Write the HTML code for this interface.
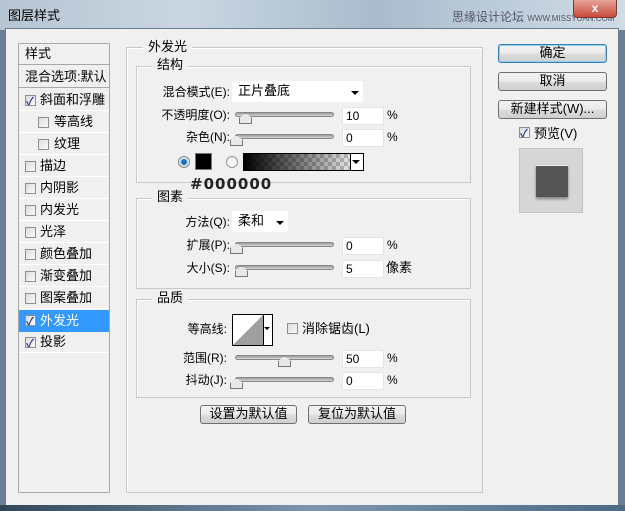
<!DOCTYPE html>
<html><head><meta charset="utf-8"><style>
*{margin:0;padding:0;box-sizing:border-box}
body{width:625px;height:511px;overflow:hidden;background:#6a7f93;font-family:"Liberation Sans","Noto Sans CJK SC",sans-serif;font-size:12px;color:#000;position:relative}
.a{position:absolute}
.title{left:0;top:0;width:625px;height:30px;background:linear-gradient(90deg,#b7c5d3 0%,#c9d6e2 30%,#a9bccd 60%,#d0dce7 100%)}
.dlg{left:5px;top:28px;width:614px;height:478px;background:#f0f0f0;border:1px solid #6d7c8b}
.bot{left:0;top:505px;width:625px;height:6px;background:linear-gradient(90deg,#31465a,#7d96ad,#4d6a85)}
.gb{position:absolute;border:1px solid #c8c8c8;box-shadow:1px 1px 0 #fff inset}
.lg{position:absolute;background:#f0f0f0;padding:0 5px;font-size:13px;line-height:14px}
.cb{position:absolute;width:11px;height:11px;border:1px solid #8e8f8f;background:linear-gradient(135deg,#dcdcdc,#fafafa)}
.cb.on::after{content:"✓";position:absolute;left:0px;top:-3px;font-size:11px;color:#2d3d8e;font-weight:bold}
.row{position:absolute;left:19px;width:90px;height:22px;border-bottom:1px solid #fff;font-size:13px;line-height:22px}
.lbl{position:absolute;font-size:12px;text-align:right;line-height:14px}
.inp{position:absolute;background:#fff;border:1px solid #e4e4e4;font-size:12px;line-height:16px;padding-left:3px;height:18px}
.tr{position:absolute;height:5px;background:linear-gradient(#9a9a9a,#d6d6d6);border-radius:3px;border:1px solid #888}
.th{position:absolute;width:0;height:0}
.th::before{content:"";position:absolute;left:-6px;top:0;width:11px;height:9px;background:#e8e8e8;border:1px solid #777;clip-path:polygon(50% 0,100% 45%,100% 100%,0 100%,0 45%)}
.btn{position:absolute;border:1px solid #707070;border-radius:3px;background:linear-gradient(#f2f2f2 0%,#ebebeb 50%,#dddddd 51%,#cfcfcf 100%);text-align:center;font-size:13px;line-height:16px}
.dd{position:absolute;background:#fff;font-size:13px;line-height:20px;padding-left:6px}
.arr{position:absolute;width:0;height:0;border-left:4px solid transparent;border-right:4px solid transparent;border-top:4px solid #000}
</style></head><body>
<div class="a title"></div>
<div class="a" style="left:8px;top:5px;font-size:13px">图层样式</div>
<div class="a" style="left:452px;top:8px;font-size:12px;color:#556">思缘设计论坛 <span style="font-size:8px">WWW.MISSYUAN.COM</span></div>
<div class="a" style="left:573px;top:0;width:44px;height:18px;background:linear-gradient(#e8a49a,#c74b3c);border:1px solid #7a3a33;border-top:none;border-radius:0 0 4px 4px;color:#fff;text-align:center;font-weight:bold;font-size:12px;line-height:16px">x</div>
<div class="a dlg"></div>
<div class="a bot"></div>

<!-- left list -->
<div class="a" style="left:18px;top:43px;width:92px;height:450px;border:1px solid #a8a8a8;background:#f0f0f0"></div>
<div class="row" style="top:43px;font-size:13px;padding-left:6px;border-bottom:1px solid #a8a8a8">样式</div>
<div class="row" style="top:66px;padding-left:6px;border-bottom:1px solid #a8a8a8">混合选项:默认</div>
<div class="row" style="top:89px;padding-left:21px">斜面和浮雕</div><div class="cb on" style="left:25px;top:95px"></div>
<div class="row" style="top:111px;padding-left:35px">等高线</div><div class="cb" style="left:38px;top:117px"></div>
<div class="row" style="top:133px;padding-left:35px">纹理</div><div class="cb" style="left:38px;top:139px"></div>
<div class="row" style="top:155px;padding-left:21px">描边</div><div class="cb" style="left:25px;top:161px"></div>
<div class="row" style="top:177px;padding-left:21px">内阴影</div><div class="cb" style="left:25px;top:183px"></div>
<div class="row" style="top:199px;padding-left:21px">内发光</div><div class="cb" style="left:25px;top:205px"></div>
<div class="row" style="top:221px;padding-left:21px">光泽</div><div class="cb" style="left:25px;top:227px"></div>
<div class="row" style="top:243px;padding-left:21px">颜色叠加</div><div class="cb" style="left:25px;top:249px"></div>
<div class="row" style="top:265px;padding-left:21px">渐变叠加</div><div class="cb" style="left:25px;top:271px"></div>
<div class="row" style="top:287px;padding-left:21px">图案叠加</div><div class="cb" style="left:25px;top:293px"></div>
<div class="row" style="top:310px;padding-left:21px;background:#3399ff;color:#fff;border:none">外发光</div><div class="cb on" style="left:25px;top:315px"></div>
<div class="row" style="top:331px;padding-left:21px">投影</div><div class="cb on" style="left:25px;top:337px"></div>

<!-- main group -->
<div class="gb" style="left:126px;top:47px;width:357px;height:446px"></div>
<div class="lg" style="left:143px;top:40px">外发光</div>
<div class="gb" style="left:136px;top:66px;width:335px;height:117px"></div>
<div class="lg" style="left:152px;top:58px">结构</div>
<div class="lbl" style="left:150px;top:85px;width:80px">混合模式(E):</div>
<div class="dd" style="left:232px;top:81px;width:131px;height:21px">正片叠底</div><div class="arr" style="left:351px;top:91px"></div>
<div class="lbl" style="left:150px;top:108px;width:80px">不透明度(O):</div>
<div class="tr" style="left:235px;top:112px;width:99px"></div><div class="th" style="left:245px;top:113px"></div>
<div class="inp" style="left:342px;top:107px;width:42px">10</div><div class="lbl" style="left:387px;top:108px">%</div>
<div class="lbl" style="left:150px;top:130px;width:80px">杂色(N):</div>
<div class="tr" style="left:235px;top:134px;width:99px"></div><div class="th" style="left:236px;top:135px"></div>
<div class="inp" style="left:342px;top:129px;width:42px">0</div><div class="lbl" style="left:387px;top:130px">%</div>
<div class="a" style="left:178px;top:156px;width:12px;height:12px;border-radius:50%;border:1px solid #888;background:radial-gradient(#1b6fb8 30%,#7ec1ea 45%,#eee 60%)"></div>
<div class="a" style="left:195px;top:153px;width:17px;height:17px;background:#000;border:1px solid #777"></div>
<div class="a" style="left:226px;top:156px;width:12px;height:12px;border-radius:50%;border:1px solid #999;background:#f4f4f4"></div>
<div class="a" style="left:243px;top:153px;width:121px;height:18px;border:1px solid #000;background:linear-gradient(90deg,#000,rgba(0,0,0,0)),repeating-conic-gradient(#ccc 0 25%,#fff 0 50%) 0 0/8px 8px"></div>
<div class="a" style="left:350px;top:154px;width:13px;height:16px;background:#fff;border-left:1px solid #000"></div><div class="arr" style="left:352px;top:160px"></div>
<div class="a" style="left:190px;top:175px;font-weight:bold;font-size:15px;color:#222;letter-spacing:1px;font-family:'DejaVu Sans',sans-serif">#000000</div>

<div class="gb" style="left:136px;top:198px;width:335px;height:91px"></div>
<div class="lg" style="left:152px;top:190px">图素</div>
<div class="lbl" style="left:150px;top:215px;width:80px">方法(Q):</div>
<div class="dd" style="left:232px;top:211px;width:56px;height:21px">柔和</div><div class="arr" style="left:276px;top:221px"></div>
<div class="lbl" style="left:150px;top:238px;width:80px">扩展(P):</div>
<div class="tr" style="left:235px;top:242px;width:99px"></div><div class="th" style="left:236px;top:243px"></div>
<div class="inp" style="left:342px;top:237px;width:42px">0</div><div class="lbl" style="left:387px;top:238px">%</div>
<div class="lbl" style="left:150px;top:261px;width:80px">大小(S):</div>
<div class="tr" style="left:235px;top:265px;width:99px"></div><div class="th" style="left:241px;top:266px"></div>
<div class="inp" style="left:342px;top:260px;width:42px">5</div><div class="lbl" style="left:386px;top:261px;font-size:13px">像素</div>

<div class="gb" style="left:136px;top:299px;width:335px;height:99px"></div>
<div class="lg" style="left:152px;top:291px">品质</div>
<div class="lbl" style="left:150px;top:322px;width:77px">等高线:</div>
<div class="a" style="left:232px;top:314px;width:41px;height:32px;border:1px solid #000;background:#fff"></div>
<svg class="a" style="left:233px;top:315px" width="30" height="30"><polygon points="0,30 30,0 30,30" fill="#a0a0a0"/></svg>
<div class="a" style="left:263px;top:315px;width:1px;height:30px;background:#000"></div><div class="arr" style="left:264px;top:327px;border-width:3px 3px 0 3px"></div>
<div class="cb" style="left:287px;top:323px"></div><div class="lbl" style="left:302px;top:322px;font-size:13px">消除锯齿(L)</div>
<div class="lbl" style="left:150px;top:351px;width:77px">范围(R):</div>
<div class="tr" style="left:235px;top:355px;width:99px"></div><div class="th" style="left:284px;top:356px"></div>
<div class="inp" style="left:342px;top:350px;width:42px">50</div><div class="lbl" style="left:387px;top:351px">%</div>
<div class="lbl" style="left:150px;top:373px;width:77px">抖动(J):</div>
<div class="tr" style="left:235px;top:377px;width:99px"></div><div class="th" style="left:236px;top:378px"></div>
<div class="inp" style="left:342px;top:372px;width:42px">0</div><div class="lbl" style="left:387px;top:373px">%</div>

<div class="btn" style="left:200px;top:405px;width:97px;height:19px">设置为默认值</div>
<div class="btn" style="left:308px;top:405px;width:98px;height:19px">复位为默认值</div>

<!-- right -->
<div class="btn" style="left:498px;top:44px;width:109px;height:19px;border-color:#3c7fb1;box-shadow:0 0 0 1px #8ad0f0 inset">确定</div>
<div class="btn" style="left:498px;top:72px;width:109px;height:19px">取消</div>
<div class="btn" style="left:498px;top:100px;width:109px;height:19px">新建样式(W)...</div>
<div class="cb on" style="left:519px;top:127px"></div><div class="lbl" style="left:534px;top:127px;font-size:13px">预览(V)</div>
<div class="a" style="left:519px;top:148px;width:64px;height:65px;background:#d6d6d6;border:1px solid #c4c4c4"></div>
<div class="a" style="left:536px;top:165px;width:32px;height:32px;background:#555;box-shadow:0 2px 3px rgba(0,0,0,.4);border-top:1px solid #eee"></div>
</body></html>
